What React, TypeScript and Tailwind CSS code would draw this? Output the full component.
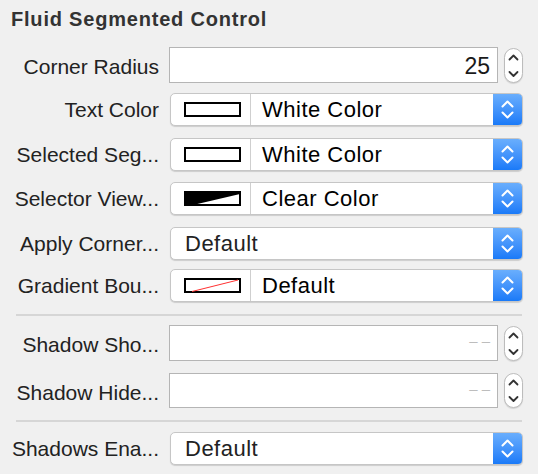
import React from "react";

function BlueArrows() {
  return (
    <div className="w-[29px] shrink-0 self-stretch bg-gradient-to-b from-[#69aefd] to-[#197af8] flex items-center justify-center">
      <svg width="29" height="33" viewBox="0 0 29 33" fill="none">
        <polyline points="9.5,13.5 14.5,8.5 19.5,13.5" stroke="white" strokeWidth="2" strokeLinecap="round" strokeLinejoin="round" />
        <polyline points="9.5,19.5 14.5,24.5 19.5,19.5" stroke="white" strokeWidth="2" strokeLinecap="round" strokeLinejoin="round" />
      </svg>
    </div>
  );
}

function Stepper() {
  return (
    <div className="ml-[6px] w-[19px] h-[35px] shrink-0 rounded-full border border-[#bcbcbc] bg-white shadow-[0_1px_1px_rgba(0,0,0,0.12)] flex items-center justify-center">
      <svg width="17" height="33" viewBox="0 0 17 33" fill="none">
        <polyline points="4.5,10.5 8.5,6.5 12.5,10.5" stroke="#333" strokeWidth="1.8" strokeLinecap="round" strokeLinejoin="round" />
        <polyline points="4.5,23 8.5,27 12.5,23" stroke="#333" strokeWidth="1.8" strokeLinecap="round" strokeLinejoin="round" />
      </svg>
    </div>
  );
}

type SwatchKind = "white" | "clear" | "gradient";

function Swatch({ kind }: { kind: SwatchKind }) {
  return (
    <svg width="57" height="15" viewBox="0 0 57 15">
      <rect x="1" y="1" width="55" height="13" fill="white" stroke="black" strokeWidth="2" />
      {kind === "clear" && <polygon points="1,1 56,1 56,3 9,14 1,14" fill="black" />}
      {kind === "gradient" && <line x1="8" y1="13.5" x2="54" y2="2" stroke="#ff3030" strokeWidth="1" />}
    </svg>
  );
}

function Label({ text, extra = "" }: { text: string; extra?: string }) {
  return (
    <div className={`w-[159px] shrink-0 text-right text-[21px] leading-[21px] text-[#222] whitespace-nowrap ${extra}`}>
      {text}
    </div>
  );
}

function ColorPopup({ label, kind, value, mt }: { label: string; kind: SwatchKind; value: string; mt: string }) {
  return (
    <div className={`flex items-center h-[33px] ${mt}`}>
      <Label text={label} />
      <div className="ml-[11px] w-[353px] h-[33px] flex rounded-[5px] border border-[#c6c6c6] bg-white overflow-hidden shadow-[0_1px_1px_rgba(0,0,0,0.15)]">
        <div className="w-[80px] shrink-0 flex items-center pl-[13px] border-r border-[#cfcfcf]">
          <Swatch kind={kind} />
        </div>
        <div className="flex-1 flex items-center pl-[11px] text-[22px] leading-[22px] tracking-[0.5px] text-black">{value}</div>
        <BlueArrows />
      </div>
    </div>
  );
}

function PlainPopup({ label, value, mt }: { label: string; value: string; mt: string }) {
  return (
    <div className={`flex items-center h-[33px] ${mt}`}>
      <Label text={label} />
      <div className="ml-[11px] w-[353px] h-[33px] flex rounded-[5px] border border-[#c6c6c6] bg-white overflow-hidden shadow-[0_1px_1px_rgba(0,0,0,0.15)]">
        <div className="flex-1 flex items-center pl-[14px] text-[22px] leading-[22px] tracking-[0.5px] text-[#222]">{value}</div>
        <BlueArrows />
      </div>
    </div>
  );
}

function FieldRow({ label, value, placeholder, mt, h }: { label: string; value?: string; placeholder?: boolean; mt: string; h: string }) {
  return (
    <div className={`flex items-center ${h} ${mt}`}>
      <Label text={label} extra="pt-[3px]" />
      <div className="ml-[10px] w-[329px] self-stretch border border-[#b5b5b5] bg-white flex items-center justify-end pr-[7px]">
        {value && <span className="text-[23px] leading-[23px] text-[#1a1a1a] pt-[2px]">{value}</span>}
        {placeholder && <span className="text-[15px] leading-[15px] text-[#bdbdbd] pb-[5px]">– –</span>}
      </div>
      <Stepper />
    </div>
  );
}

function Separator({ mt }: { mt: string }) {
  return <div className={`ml-[16px] w-[506px] h-[2px] bg-[#d6d6d6] ${mt}`} />;
}

export default function App() {
  return (
    <div className="w-[538px] h-[474px] bg-[#f0f0f0] font-['Liberation_Sans',Arial,sans-serif] flex flex-col">
      <div className="h-[47px] pt-[9px] pl-[11px] text-[20px] leading-[20px] font-bold tracking-[0.8px] text-[#333]">
        Fluid Segmented Control
      </div>
      <FieldRow label="Corner Radius" value="25" mt="" h="h-[36px]" />
      <ColorPopup label="Text Color" kind="white" value="White Color" mt="mt-[10px]" />
      <ColorPopup label="Selected Seg..." kind="white" value="White Color" mt="mt-[12px]" />
      <ColorPopup label="Selector View..." kind="clear" value="Clear Color" mt="mt-[11px]" />
      <PlainPopup label="Apply Corner..." value="Default" mt="mt-[12px]" />
      <ColorPopup label="Gradient Bou..." kind="gradient" value="Default" mt="mt-[9px]" />
      <Separator mt="mt-[12px]" />
      <FieldRow label="Shadow Sho..." placeholder mt="mt-[9px]" h="h-[36px]" />
      <FieldRow label="Shadow Hide..." placeholder mt="mt-[12px]" h="h-[35px]" />
      <Separator mt="mt-[12px]" />
      <PlainPopup label="Shadows Ena..." value="Default" mt="mt-[10px]" />
    </div>
  );
}
